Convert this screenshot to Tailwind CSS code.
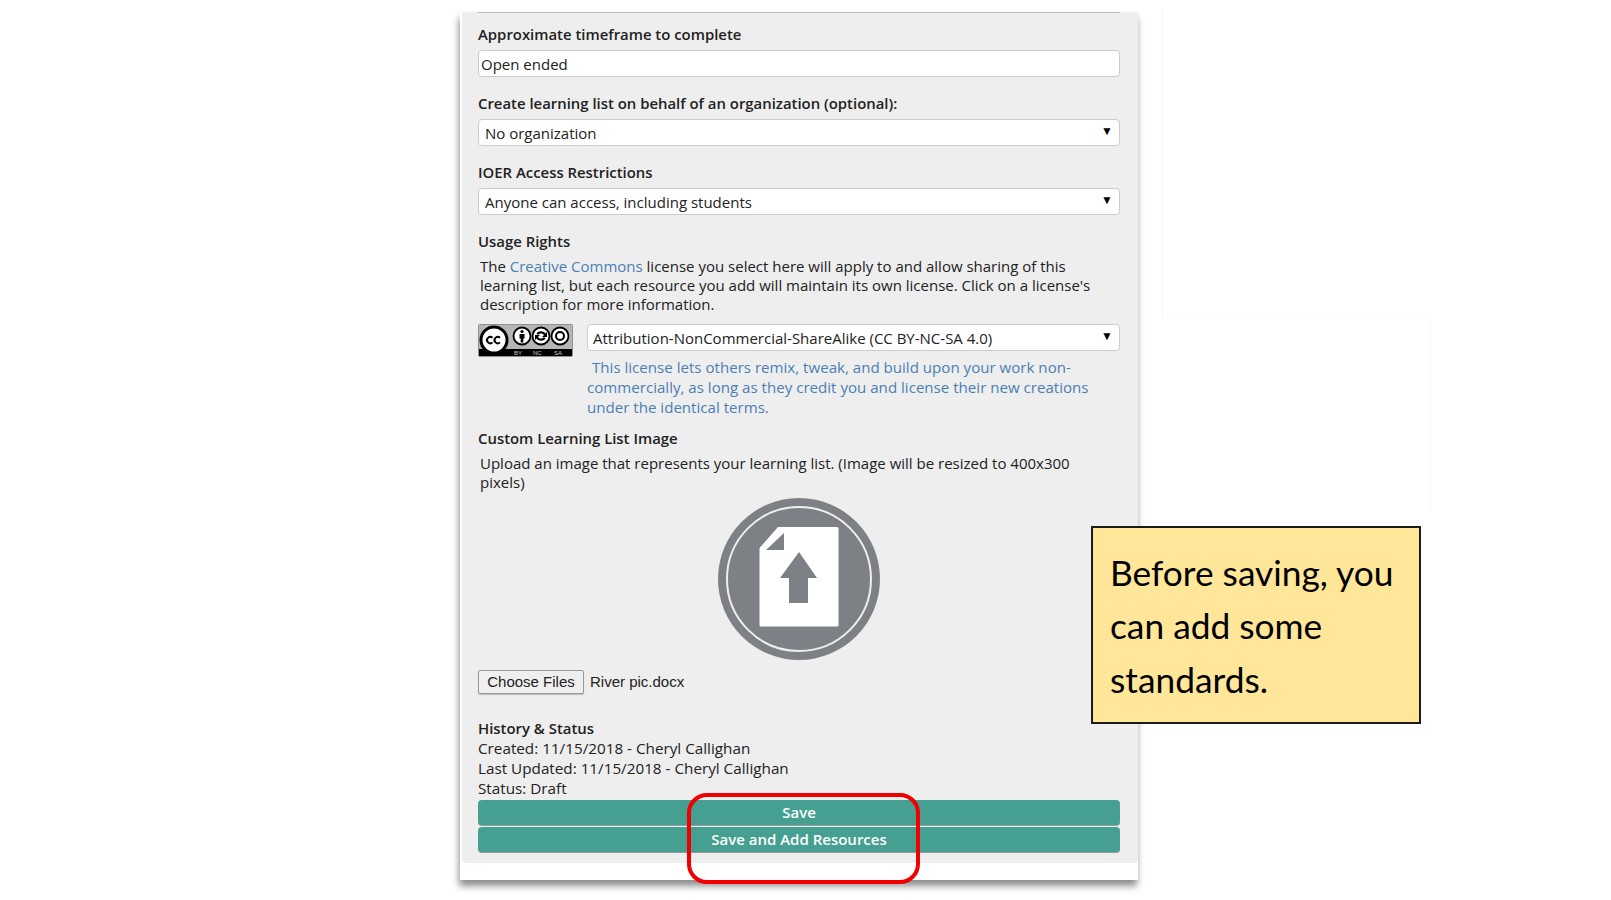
<!DOCTYPE html>
<html lang="en">
<head>
    <meta charset="UTF-8">
    <title>Learning List</title>
    <script src="https://cdn.jsdelivr.net/npm/@tailwindcss/browser@4"></script>
</head>
<body class="bg-white font-['Open_Sans',sans-serif] text-[15px] text-[#222]">
    <div class="relative w-[1611px] h-[900px] overflow-hidden">
        <!-- form panel -->
        <div class="ml-[460px] mt-3 w-[678px] h-[868px] pl-[2px] bg-white shadow-[-1px_6px_7px_rgba(0,0,0,0.45)]">
            <div class="h-[851px] bg-[#eeeeee] rounded-b pl-[16px] pr-[18px]">
                <div class="h-px bg-[#bbb]"></div>
                <label class="block mt-[12px] h-5 leading-[18px] font-semibold text-[14.9px]">Approximate timeframe to complete</label>
                <div class="mt-[5px] h-[27px] bg-white rounded border border-[#ccc] pl-[2px] leading-[26px]">Open ended</div>

                <label class="block mt-[17px] h-5 leading-[18px] font-semibold text-[14.9px]">Create learning list on behalf of an organization (optional):</label>
                <div class="mt-[5px] h-[27px] bg-white rounded border border-[#ccc] pl-[6px] pr-[6px] leading-[26px] flex justify-between">
                    <span>No organization</span><span class="text-[12px] leading-[22px] text-black">▼</span>
                </div>

                <label class="block mt-[17px] h-5 leading-[18px] font-semibold text-[14.9px]">IOER Access Restrictions</label>
                <div class="mt-[5px] h-[27px] bg-white rounded border border-[#ccc] pl-[6px] pr-[6px] leading-[26px] flex justify-between">
                    <span>Anyone can access, including students</span><span class="text-[12px] leading-[22px] text-black">▼</span>
                </div>

                <label class="block mt-[17px] h-5 leading-[18px] font-semibold text-[14.9px]">Usage Rights</label>
                <p class="mt-[5px] pl-[2px] leading-[19px]">The <a class="text-[#4a7fb5]">Creative Commons</a> license you select here will apply to and allow sharing of this learning list, but each resource you add will maintain its own license. Click on a license's description for more information.</p>

                <div class="mt-[10px] flex gap-[14px]">
                    <svg class="w-[95px] h-[33px] shrink-0" viewBox="0 0 95 33">
                        <rect width="95" height="33" rx="2" fill="#8f928f"/>
                        <rect x="1" y="1" width="93" height="31" fill="#b4b8b4"/>
                        <path d="M1 25H94V32H1Z" fill="#000"/>
                        <circle cx="16" cy="16" r="13" fill="#fff" stroke="#000" stroke-width="3"/>
                        <path d="M14.5 13.8a3.2 3.2 0 1 0 0 4.6M22 13.8a3.2 3.2 0 1 0 0 4.6" fill="none" stroke="#000" stroke-width="2"/>
                        <g fill="#fff" stroke="#000" stroke-width="1.8">
                            <circle cx="44" cy="12" r="8.5"/>
                            <circle cx="63" cy="12" r="8.5"/>
                            <circle cx="82" cy="12" r="8.5"/>
                        </g>
                        <circle cx="44" cy="7.5" r="1.6"/>
                        <path d="M41.5 10H46.5V14.5H45.3V18.5H42.7V14.5H41.5Z"/>
                        <path d="M58.5 9.5C60.5 6.5 65.5 6.5 67.5 9.5L69 8V13H64L66 11C64.5 9 61.5 9 60 11ZM67.5 14.5C65.5 17.5 60.5 17.5 58.5 14.5L57 16V11H62L60 13C61.5 15 64.5 15 66 13Z"/>
                        <circle cx="82" cy="12" r="4" fill="none" stroke="#000" stroke-width="2"/>
                        <text x="36" y="31" font-size="6" fill="#ccc" font-family="'Liberation Sans',sans-serif">BY</text>
                        <text x="55" y="31" font-size="6" fill="#ccc" font-family="'Liberation Sans',sans-serif">NC</text>
                        <text x="76" y="31" font-size="6" fill="#ccc" font-family="'Liberation Sans',sans-serif">SA</text>
                    </svg>
                    <div class="flex-1">
                        <div class="h-[27px] bg-white rounded border border-[#ccc] pl-[5px] pr-[6px] leading-[26px] flex justify-between">
                            <span>Attribution-NonCommercial-ShareAlike (CC BY-NC-SA 4.0)</span><span class="text-[12px] leading-[22px] text-black">▼</span>
                        </div>
                        <p class="mt-[6px] leading-[20px] text-[15.1px] text-[#4a7fb5] indent-[5px]">This license lets others remix, tweak, and build upon your work non-commercially, as long as they credit you and license their new creations under the identical terms.</p>
                    </div>
                </div>

                <label class="block mt-[12px] h-5 leading-[18px] font-semibold text-[14.9px]">Custom Learning List Image</label>
                <p class="mt-[5px] pl-[2px] pr-[12px] leading-[19px]">Upload an image that represents your learning list. (Image will be resized to 400x300 pixels)</p>

                <div class="mt-[6px] flex justify-center">
                    <svg class="w-[162px] h-[162px]" viewBox="0 0 162 162">
                        <circle cx="81" cy="81" r="81" fill="#7d8084"/>
                        <circle cx="81" cy="81" r="72" fill="none" stroke="#eeeeee" stroke-width="2"/>
                        <path d="M60 29H119a1.5 1.5 0 0 1 1.5 1.5V127a1.5 1.5 0 0 1-1.5 1.5H43a1.5 1.5 0 0 1-1.5-1.5V50Z" fill="#fff"/>
                        <path d="M66 35V52H48Z" fill="#7d8084"/>
                        <path d="M81 54L99 80H90V105H71V80H62Z" fill="#7d8084"/>
                    </svg>
                </div>

                <div class="mt-[10px] flex items-center gap-[6px] font-['Liberation_Sans',sans-serif]">
                    <button class="w-[106px] h-[24px] bg-[#efefef] border border-[#999] rounded-[2px] text-[15px] shadow-[0_1px_1px_rgba(0,0,0,0.2)]">Choose Files</button>
                    <span class="text-[15px]">River pic.docx</span>
                </div>

                <div class="mt-[24px] leading-[20px] text-[15.25px]">
                    <p class="font-semibold text-[14.9px]">History &amp; Status</p>
                    <p>Created: 11/15/2018 - Cheryl Callighan</p>
                    <p>Last Updated: 11/15/2018 - Cheryl Callighan</p>
                    <p>Status: Draft</p>
                </div>

                <div class="mt-[2px] flex flex-col gap-px">
                    <button class="h-[26px] bg-[#45a091] rounded text-white font-semibold border-b border-[#999]">Save</button>
                    <button class="h-[26px] bg-[#45a091] rounded text-white font-semibold border-b border-[#999]">Save and Add Resources</button>
                </div>
            </div>
        </div>

        <!-- faint leftover edges of the pasted picture -->
        <div class="absolute left-[1162px] top-[8px] h-[310px] border-l border-[#f6f7f6]"></div>
        <div class="absolute left-[1162px] top-[318px] w-[268px] h-[195px] border-t border-r border-[#fbfbf0]"></div>

        <!-- red highlight over the buttons -->
        <div class="absolute left-[687px] top-[793px] w-[233px] h-[91px] rounded-[20px] border-4 border-[#f00000]"></div>

        <!-- callout -->
        <div class="absolute left-[1091px] top-[526px] w-[330px] h-[198px] bg-[#ffe699] border-2 border-[#1c1c1c] pl-[17px] pt-[18px] font-['Lato',sans-serif] text-[35.3px] leading-[53.4px] text-black">
            Before saving, you<br>can add some<br>standards.
        </div>
    </div>
</body>
</html>
